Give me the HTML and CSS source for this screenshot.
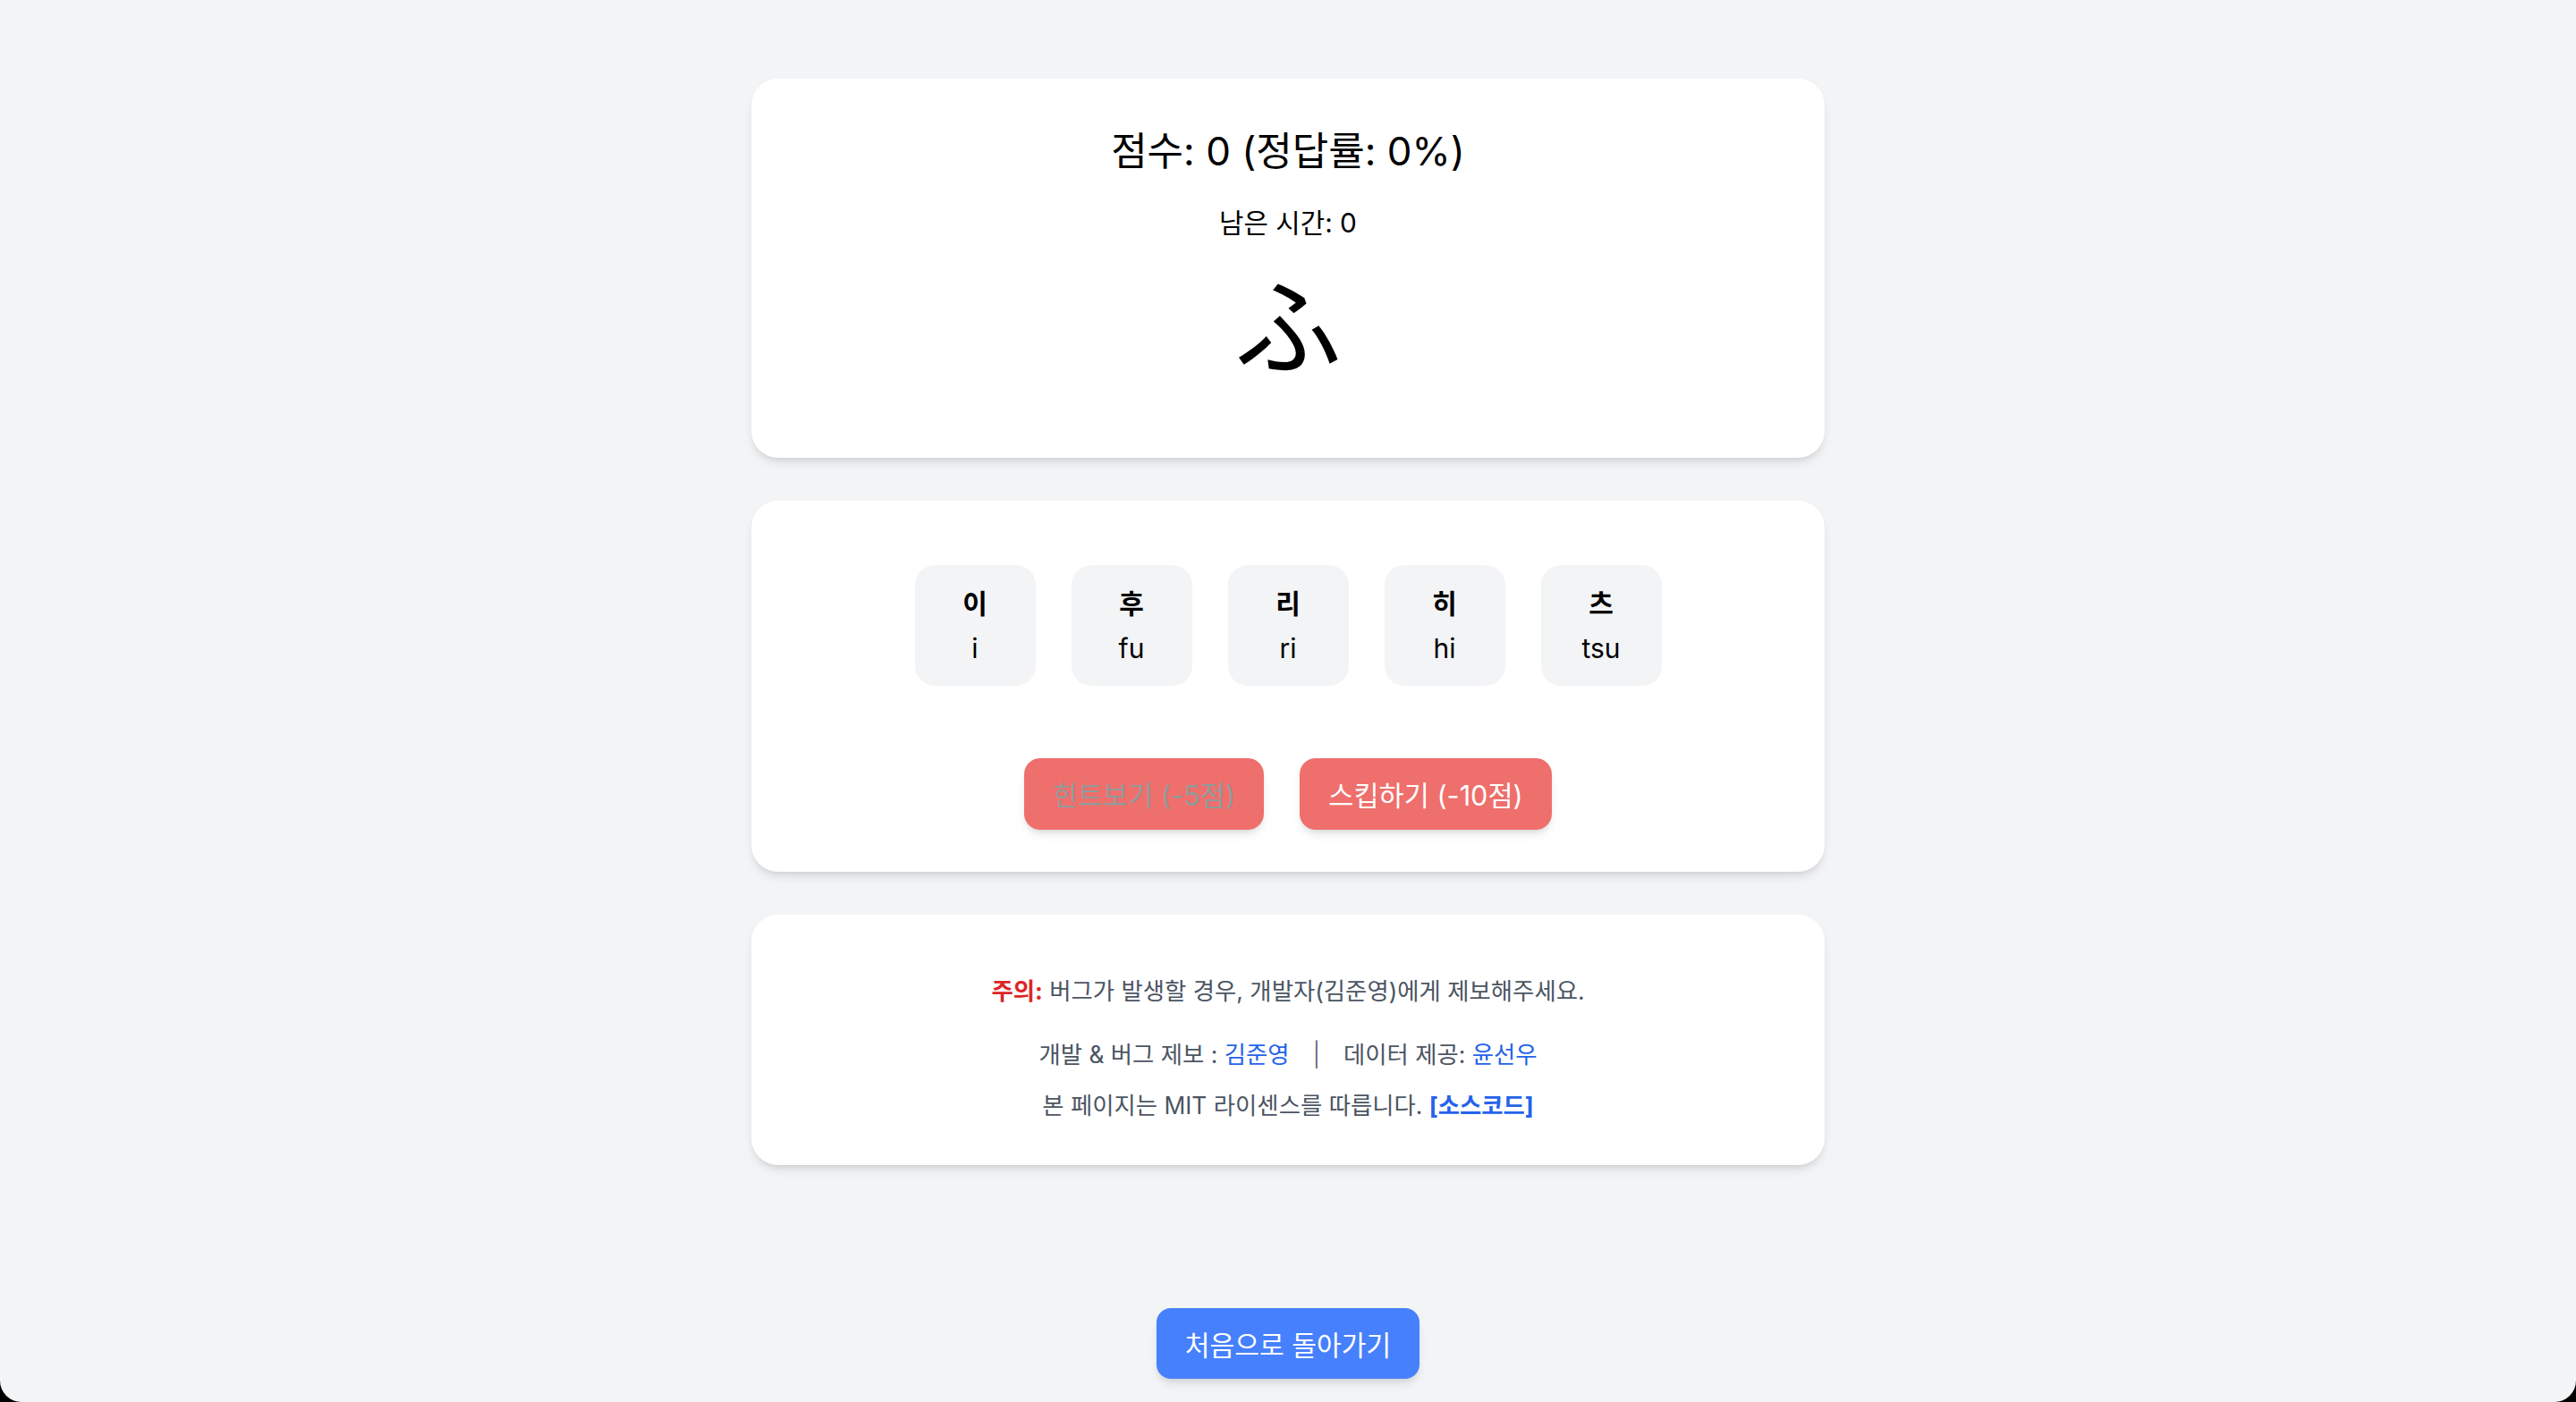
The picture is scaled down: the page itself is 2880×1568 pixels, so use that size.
FILE: index.html
```html
<!DOCTYPE html>
<html lang="ko">
<head>
<meta charset="utf-8">
<title>히라가나 퀴즈</title>
<link rel="stylesheet" href="styles.css">
</head>
<body>
<div class="window">
  <main class="main">
    <section class="card card-quiz">
      <h1 class="score">점수: 0 (정답률: 0%)</h1>
      <p class="timer">남은 시간: 0</p>
      <div class="kana" lang="ja">ふ</div>
    </section>

    <section class="card card-choices">
      <div class="choices">
        <button class="choice"><span class="choice-ko">이</span><span class="choice-ro">i</span></button>
        <button class="choice"><span class="choice-ko">후</span><span class="choice-ro">fu</span></button>
        <button class="choice"><span class="choice-ko">리</span><span class="choice-ro">ri</span></button>
        <button class="choice"><span class="choice-ko">히</span><span class="choice-ro">hi</span></button>
        <button class="choice"><span class="choice-ko">츠</span><span class="choice-ro">tsu</span></button>
      </div>
      <div class="actions">
        <button class="action action-hint">힌트보기 (-5점)</button>
        <button class="action action-skip">스킵하기 (-10점)</button>
      </div>
    </section>

    <section class="card card-info">
      <p class="info-line info-warn"><strong class="warn">주의:</strong> 버그가 발생할 경우, 개발자(김준영)에게 제보해주세요.</p>
      <p class="info-line info-credit">개발 &amp; 버그 제보 : <a class="link" href="#">김준영</a><span class="sep">|</span>데이터 제공: <a class="link" href="#">윤선우</a></p>
      <p class="info-line info-license">본 페이지는 MIT 라이센스를 따릅니다. <a class="link link-bold" href="#">[소스코드]</a></p>
    </section>

    <div class="back-wrap">
      <button class="back">처음으로 돌아가기</button>
    </div>
  </main>
</div>
</body>
</html>
```

FILE: styles.css
```css
* {
  box-sizing: border-box;
}

html {
  background: #000;
}

body {
  margin: 0;
  font-family: "Inter", "Noto Sans CJK KR", "Noto Sans", sans-serif;
  color: #000;
}

.window {
  height: 1568px;
  background: #f3f4f6;
  border-radius: 0 0 24px 24px;
  overflow: hidden;
}

.main {
  display: flex;
  flex-direction: column;
  align-items: center;
  padding-top: 88px;
}

.card {
  width: 1200px;
  background: #fff;
  border-radius: 30px;
  box-shadow: 0 7px 11px -2px rgba(0, 0, 0, 0.1), 0 4px 7px -4px rgba(0, 0, 0, 0.1);
  display: flex;
  flex-direction: column;
  align-items: center;
}

.card + .card {
  margin-top: 48px;
}

/* quiz card */
.card-quiz {
  padding: 52px 44px 44px;
}

.score {
  margin: 0;
  font-size: 44px;
  line-height: 59px;
  font-weight: 400;
}

.timer {
  margin: 28px 0 0;
  font-size: 29.8px;
  line-height: 44px;
}

.kana {
  margin: 24px 0 45px;
  font-family: "Noto Sans CJK JP", sans-serif;
  font-size: 120px;
  line-height: 128px;
}

/* choices card */
.card-choices {
  padding: 72px 44px 47px;
}

.choices {
  display: flex;
  gap: 40px;
}

.choice {
  width: 135px;
  height: 135px;
  border: 0;
  border-radius: 22px;
  background: #f3f4f6;
  display: flex;
  flex-direction: column;
  align-items: center;
  justify-content: center;
  gap: 6px;
  font-family: inherit;
  color: #000;
  padding: 0;
}

.choice-ko {
  font-size: 30px;
  line-height: 44px;
  font-weight: 700;
}

.choice-ro {
  font-size: 30px;
  line-height: 44px;
  font-weight: 400;
}

.actions {
  display: flex;
  gap: 40px;
  margin-top: 81px;
}

.action {
  height: 80px;
  padding: 0 30px;
  border: 0;
  border-radius: 18px;
  background: #ee6f6c;
  font-family: inherit;
  font-size: 30.6px;
  box-shadow: 0 7px 11px -2px rgba(0, 0, 0, 0.1), 0 4px 7px -4px rgba(0, 0, 0, 0.1);
}

.action-hint {
  color: #909b9b;
  width: 268px;
}

.action-skip {
  color: #fff;
  width: 282px;
}

/* info card */
.card-info {
  padding: 65px 44px 47px;
  color: #4b5563;
  font-size: 26.4px;
}

.info-line {
  margin: 0;
  line-height: 40px;
}

.info-credit {
  margin-top: 31px;
}

.info-license {
  margin-top: 17px;
}

.warn {
  color: #dc2626;
  font-weight: 700;
}

.link {
  color: #2563eb;
  text-decoration: none;
}

.link-bold {
  font-weight: 700;
}

.sep {
  margin: 0 26px;
  font-weight: 300;
}

/* back button */
.back-wrap {
  margin-top: 160px;
}

.back {
  width: 294px;
  height: 79px;
  border: 0;
  border-radius: 16px;
  background: #4680fc;
  color: #fff;
  font-family: inherit;
  font-size: 30.2px;
  box-shadow: 0 7px 11px -2px rgba(0, 0, 0, 0.1), 0 4px 7px -4px rgba(0, 0, 0, 0.1);
}
```
